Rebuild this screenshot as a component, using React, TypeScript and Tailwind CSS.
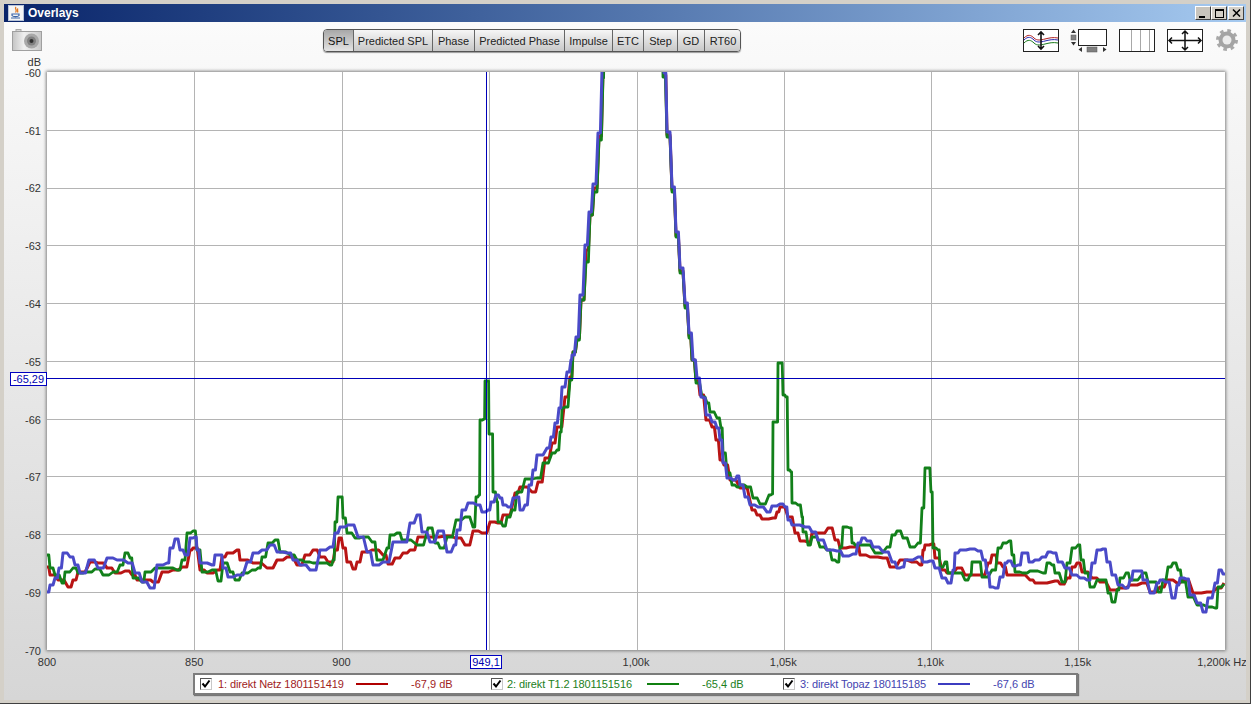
const font = "font-['Liberation_Sans',Arial,sans-serif]"

const tabs = [
    { label: "SPL", width: "w-[30px]", active: true },
    { label: "Predicted SPL", width: "w-[79px]" },
    { label: "Phase", width: "w-[42px]" },
    { label: "Predicted Phase", width: "w-[90px]" },
    { label: "Impulse", width: "w-[48px]" },
    { label: "ETC", width: "w-[31px]" },
    { label: "Step", width: "w-[34px]" },
    { label: "GD", width: "w-[27px]" },
    { label: "RT60", width: "w-[36px]" },
]

const yLabels = ["-60", "-61", "-62", "-63", "-64", "-65", "-66", "-67", "-68", "-69", "-70"]
const xLabels = ["800", "850", "900", "", "1,00k", "1,05k", "1,10k", "1,15k"]
const gridX = [194, 342, 489, 637, 784, 931, 1078]
const gridY = [130, 188, 245, 303, 361, 419, 476, 534, 592]

const redData = `47,567 50,575 58,580 68,587 73,580 78,572 90,562 98,563 107,568 115,573 125,571 132,575 137,580 147,580 153,582 162,572 173,570 182,567 190,550 193,548 200,570 207,573 217,570 222,557 227,553 237,550 240,560 253,563 267,568 277,560 287,557 297,565 305,555 313,550 320,557 328,562 330,562 335,550 339,538 343,548 347,562 353,569 357,562 362,552 372,550 383,555 388,564 395,558 403,553 410,550 418,537 430,537 445,536 455,538 465,545 473,531 482,533 490,522 498,523 503,515 515,493 520,487 532,492 538,482 545,458 552,443 557,427 565,397 570,377 573,352 577,338 581,300 586,250 590,215 594,188 599,136 603,70 604,40 662,40 664,75 667,135 672,190 676,236 680,271 685,306 689,336 692,360 696,380 700,395 706,420 712,427 716,440 720,460 724,465 730,480 740,488 752,510 757,515 762,519 773,518 777,512 780,507 788,517 795,533 800,541 808,542 812,533 820,533 828,528 835,540 840,548 850,547 857,547 860,555 870,557 883,558 890,567 900,560 912,562 920,565 923,550 925,545 932,544 935,558 942,570 947,573 957,568 965,575 980,575 988,563 992,555 995,555 997,563 1003,567 1007,575 1018,575 1030,580 1035,583 1055,581 1060,584 1067,578 1072,567 1077,563 1082,572 1092,578 1100,582 1110,590 1120,588 1130,585 1142,583 1150,592 1160,587 1167,580 1177,583 1182,580 1193,593 1207,592 1217,588 1224,583`

const greenData = `47,555 50,568 55,575 62,583 65,572 73,568 78,573 87,572 95,569 103,575 113,572 120,565 125,553 130,558 133,578 142,582 145,572 155,568 167,568 177,570 182,560 187,533 193,531 197,550 202,572 212,570 218,581 223,563 230,572 235,580 242,573 252,570 258,568 262,557 268,543 275,540 280,552 290,555 297,560 305,562 313,563 323,563 330,565 333,560 335,522 338,497 341,497 343,518 347,533 355,538 363,537 372,542 377,560 387,548 390,535 397,533 402,540 417,545 428,528 435,543 440,548 447,537 456,520 465,517 473,527 476,497 479,495 480,420 484,419 485,381 488,381 489,434 492,434 493,492 497,502 498,522 503,526 507,517 512,510 517,492 525,479 537,478 543,463 552,453 557,450 560,432 562,408 565,407 570,380 573,352 577,340 581,300 586,262 590,215 594,192 599,140 603,78 604,40 662,40 663,77 667,137 672,192 676,237 680,273 685,308 689,338 692,360 696,383 702,397 707,403 710,412 717,418 721,428 723,453 727,473 732,485 737,487 740,485 747,487 753,498 760,504 769,495 772,494 773,422 777,422 778,363 781,363 783,395 786,397 788,470 791,472 792,503 798,505 802,517 803,532 808,545 812,537 820,547 827,550 832,560 837,562 840,547 843,527 850,528 852,543 855,545 863,545 875,553 887,547 892,535 897,531 903,538 910,547 918,543 922,508 925,468 928,468 931,492 933,548 938,550 940,567 945,562 948,573 957,573 965,580 970,575 972,562 978,562 982,577 992,570 998,548 1003,543 1009,541 1012,555 1015,572 1023,573 1030,571 1043,573 1047,563 1052,565 1055,573 1062,582 1067,563 1072,548 1078,545 1081,560 1085,573 1090,587 1097,580 1103,580 1108,593 1112,602 1117,590 1120,578 1126,573 1130,580 1143,573 1148,582 1153,582 1158,592 1163,580 1168,567 1173,563 1178,570 1182,582 1188,597 1197,605 1208,607 1215,608 1218,587 1224,584`

const blueData = `47,592 50,585 55,578 59,568 63,553 70,557 75,565 80,573 89,560 98,568 107,558 117,560 128,563 135,573 142,582 150,588 157,565 167,563 170,548 175,539 180,550 185,555 190,538 195,537 197,550 200,563 212,565 215,555 220,555 223,568 228,577 237,575 247,562 253,553 262,550 270,545 277,552 287,553 293,560 300,565 310,570 320,550 330,547 335,533 340,527 348,525 358,537 367,552 373,565 383,562 393,542 402,542 410,523 417,515 422,532 430,542 438,531 447,552 454,545 457,530 462,510 468,503 477,505 482,512 488,510 491,502 496,495 500,498 503,505 508,507 513,498 517,497 520,510 525,505 529,485 533,470 537,455 547,448 551,437 555,423 559,408 562,387 567,372 571,360 572,355 576,337 580,295 585,245 589,212 593,184 598,133 602,70 603,40 663,40 664,73 667,132 672,187 676,232 680,268 685,303 689,333 693,360 697,378 701,397 704,398 706,415 712,422 717,428 720,440 723,463 727,478 733,480 737,476 740,485 745,497 750,505 758,507 767,512 772,506 780,504 785,507 788,520 792,525 805,527 812,532 818,540 827,550 837,551 843,556 853,554 858,543 862,538 867,541 873,547 883,552 892,562 897,568 902,567 905,560 918,557 923,562 930,561 935,568 942,578 948,583 953,570 955,553 960,550 970,549 978,551 983,560 987,573 990,587 995,588 1000,577 1005,563 1008,561 1013,566 1018,565 1022,553 1026,553 1029,562 1035,560 1042,557 1048,552 1053,553 1058,562 1065,568 1072,575 1080,578 1087,580 1092,563 1097,550 1103,549 1107,562 1112,575 1118,585 1125,588 1130,580 1133,571 1140,571 1143,580 1150,593 1157,583 1160,580 1165,582 1172,598 1177,585 1180,578 1186,579 1190,595 1197,603 1203,612 1208,598 1215,583 1219,570 1223,574 1225,574`

// hold each value for a bit before moving on, the trace is stepped in the original
function stepped(data: string) {
    const pts = data.split(" ").map((p) => p.split(",").map(Number))
    const out: string[] = []
    pts.forEach((p, i) => {
        out.push(`${p[0]},${p[1]}`)
        const next = pts[i + 1]
        if (next) out.push(`${p[0] + (next[0] - p[0]) * 0.6},${p[1]}`)
    })
    return out.join(" ")
}

function JavaIcon() {
    return (
        <svg width="16" height="16" viewBox="0 0 16 16">
            <rect x="0.5" y="0.5" width="15" height="15" fill="#f4f4f4" stroke="#b8c4d8" />
            <path d="M8 2C6 4 10 5 7.500 7.500M10 3.500C8.500 5 10.500 5.500 9.500 7.500" fill="none" stroke="#e07820" strokeWidth="1.300" />
            <path d="M4 9H11V10.500C10 12 5 12 4 10.500ZM3 13H12" fill="none" stroke="#3a64a8" strokeWidth="1.200" />
        </svg>
    )
}

function WinButton({ children, dim }: { children: React.ReactNode; dim?: boolean }) {
    return (
        <div
            className={`flex h-[14px] w-[16px] items-center justify-center border border-t-white border-l-white border-r-[#404040] border-b-[#404040] ${dim ? "bg-[#c8c4bc]" : "bg-[#d4d0c8]"}`}
        >
            {children}
        </div>
    )
}

function Camera() {
    return (
        <svg width="30" height="22" viewBox="0 0 30 22">
            <defs>
                <linearGradient id="cam" x1="0" y1="0" x2="1" y2="0">
                    <stop offset="0" stopColor="#c4c4c4" />
                    <stop offset="0.4" stopColor="#f0f0f0" />
                    <stop offset="1" stopColor="#c8c8c8" />
                </linearGradient>
            </defs>
            <rect x="4" y="0.500" width="5" height="3" fill="#d8d8d8" stroke="#a8a8a8" />
            <rect x="0.500" y="2.500" width="29" height="19" fill="url(#cam)" stroke="#a0a0a0" />
            <circle cx="19.500" cy="12" r="7.500" fill="#a8a8a8" />
            <circle cx="19.500" cy="12" r="4.500" fill="#808080" />
            <circle cx="19.500" cy="12" r="2" fill="#303030" />
        </svg>
    )
}

function SpreadIcon() {
    return (
        <svg width="36" height="23" viewBox="0 0 36 23" className="shrink-0">
            <rect x="0.500" y="0.500" width="35" height="22" fill="#fff" stroke="#222" />
            <path d="M1 9C5 5 8 6 11 9S18 11 22 10 30 8 35 9" fill="none" stroke="#b02020" />
            <path d="M1 11C5 7 8 8 11 11S18 13 22 12 30 10 35 11" fill="none" stroke="#2828b0" />
            <path d="M1 14C5 10 8 11 11 14S18 16 22 15 30 13 35 14" fill="none" stroke="#187818" />
            <path d="M18 3V20M15 6L18 3L21 6M15 17L18 20L21 17" fill="none" stroke="#111" strokeWidth="1.600" />
        </svg>
    )
}

function ResizeIcon() {
    return (
        <svg width="37" height="27" viewBox="0 0 37 27" className="shrink-0">
            <rect x="8.500" y="0.500" width="28" height="16" fill="#fff" stroke="#222" />
            <path d="M1 4L3.500 0.500L6 4Z" fill="#333" />
            <rect x="1" y="6" width="5" height="5" fill="#808080" stroke="#555" strokeWidth="0.500" />
            <path d="M1 13L3.500 16.500L6 13Z" fill="#333" />
            <path d="M12 18L8.500 20.500L12 23Z" fill="#333" />
            <rect x="17" y="18" width="10" height="5" fill="#808080" stroke="#555" strokeWidth="0.500" />
            <path d="M33 18L36.500 20.500L33 23Z" fill="#333" />
        </svg>
    )
}

function GridIcon() {
    return (
        <svg width="36" height="23" viewBox="0 0 36 23" className="shrink-0">
            <rect x="0.500" y="0.500" width="35" height="22" fill="#fff" stroke="#222" />
            <path d="M12.500 1V22M21.500 1V22M30.500 1V22" stroke="#a8a8a8" />
        </svg>
    )
}

function MoveIcon() {
    return (
        <svg width="36" height="23" viewBox="0 0 36 23" className="shrink-0">
            <rect x="0.500" y="0.500" width="35" height="22" fill="#fff" stroke="#222" />
            <path d="M18 2V21M2 11.500H34M15 5L18 2L21 5M15 18L18 21L21 18M5 8.500L2 11.500L5 14.500M31 8.500L34 11.500L31 14.500" fill="none" stroke="#111" strokeWidth="1.500" />
        </svg>
    )
}

function Gear() {
    return (
        <svg width="22" height="22" viewBox="0 0 22 22" className="shrink-0">
            <circle cx="11" cy="11" r="9.500" fill="none" stroke="#a8a8a8" strokeWidth="3" strokeDasharray="3.600 3.860" />
            <circle cx="11" cy="11" r="8.500" fill="#a4a4a4" />
            <circle cx="11" cy="11" r="4.500" fill="#ececec" />
        </svg>
    )
}

function Check() {
    return (
        <div className="flex h-[12px] w-[12px] shrink-0 items-center justify-center border border-t-[#555] border-l-[#555] border-r-[#c8c8c8] border-b-[#c8c8c8] bg-white">
            <svg width="10" height="10" viewBox="0 0 10 10">
                <path d="M1.500 4.500L4 7.500L8.500 1.500" fill="none" stroke="#000" strokeWidth="2" />
            </svg>
        </div>
    )
}

function LegendItem(props: { name: string; value: string; text: string; line: string; nameW: string; valueW: string; gap: string }) {
    return (
        <div className={`flex items-center ${props.gap}`}>
            <Check />
            <span className={`whitespace-nowrap tracking-[-0.1px] ${props.nameW} ${props.text}`}>{props.name}</span>
            <span className={`h-[2px] w-[32px] shrink-0 ${props.line}`} />
            <span className={`whitespace-nowrap ${props.valueW} ${props.text}`}>{props.value}</span>
        </div>
    )
}

export default function App() {
    return (
        <div className={`flex h-[704px] w-[1251px] flex-col overflow-hidden border-b border-r border-b-[#404040] border-r-[#404040] bg-[#d4d0c8] px-[4px] pb-[3px] pt-[4px] text-[11px] text-[#333] ${font}`}>
            {/* title bar */}
            <div className="flex h-[18px] shrink-0 items-center bg-gradient-to-r from-[#0a246a] to-[#a6caf0] pl-[4px] pr-[2px]">
                <JavaIcon />
                <span className="ml-[4px] text-[12px] font-bold text-white">Overlays</span>
                <div className="ml-auto flex">
                    <WinButton dim>
                        <span className="mt-[7px] mr-[2px] h-[2px] w-[6px] bg-black" />
                    </WinButton>
                    <WinButton>
                        <span className="h-[9px] w-[9px] border border-t-2 border-black" />
                    </WinButton>
                    <div className="ml-[1px]">
                        <WinButton>
                            <svg width="9" height="8" viewBox="0 0 9 8">
                                <path d="M1 0.500L8 7.500M8 0.500L1 7.500" stroke="#000" strokeWidth="1.500" />
                            </svg>
                        </WinButton>
                    </div>
                </div>
            </div>

            <div className="relative flex min-h-0 flex-1 flex-col overflow-hidden bg-gradient-to-b from-[#fbfbfb] to-[#d6d6d6]">
                {/* toolbar */}
                <div className="flex h-[50px] shrink-0 items-start">
                    <div className="flex w-[38px] shrink-0 flex-col items-end pt-[7px]">
                        <Camera />
                        <span className="mt-[5px] pr-[1px] leading-[12px]">dB</span>
                    </div>
                    <div className="ml-[281px] mt-[7px] flex h-[23px] w-[418px] shrink-0 overflow-hidden rounded-[4px] border border-[#555] shadow-[0_1px_1px_#999]">
                        {tabs.map((t) => (
                            <div
                                key={t.label}
                                className={`flex shrink-0 items-center justify-center border-r border-r-[#666] pt-[1px] last:border-r-0 ${t.width} ${t.active ? "bg-gradient-to-b from-[#a8a8a8] to-[#e4e4e4] text-[#111]" : "bg-gradient-to-b from-[#f6f6f6] to-[#c8c8c8] text-[#222]"}`}
                            >
                                {t.label}
                            </div>
                        ))}
                    </div>
                    <div className="ml-[282px] mt-[7px] flex items-start">
                        <SpreadIcon />
                        <div className="ml-[11px]">
                            <ResizeIcon />
                        </div>
                        <div className="ml-[12px]">
                            <GridIcon />
                        </div>
                        <div className="ml-[12px]">
                            <MoveIcon />
                        </div>
                        <div className="ml-[13px]">
                            <Gear />
                        </div>
                    </div>
                </div>

                {/* plot row */}
                <div className="flex h-[578px] shrink-0">
                    <div className="mt-[1px] flex h-[578px] w-[43px] shrink-0 flex-col justify-between pr-[6px]">
                        {yLabels.map((l) => (
                            <div key={l} className="flex h-0 items-center justify-end">
                                {l}
                            </div>
                        ))}
                    </div>
                    <div className="h-[578px] w-[1178px] shrink-0 bg-white shadow-[0_0_3px_1px_#808080]">
                        <svg width="1178" height="578" viewBox="47 72 1178 578" className="block">
                            {gridX.map((x) => (
                                <line key={x} x1={x + 0.5} x2={x + 0.5} y1="72" y2="650" stroke="#b4b4b4" />
                            ))}
                            {gridY.map((y) => (
                                <line key={y} x1="47" x2="1225" y1={y + 0.5} y2={y + 0.5} stroke="#b4b4b4" />
                            ))}
                            <polyline points={stepped(redData)} fill="none" stroke="#b81414" strokeWidth="3" strokeLinejoin="round" />
                            <polyline points={stepped(greenData)} fill="none" stroke="#12801a" strokeWidth="2.800" strokeLinejoin="round" />
                            <polyline points={stepped(blueData)} fill="none" stroke="#4a4ac8" strokeWidth="3" strokeLinejoin="round" />
                            <line x1="486.500" x2="486.500" y1="72" y2="650" stroke="#0000b8" />
                            <line x1="47" x2="1225" y1="378.500" y2="378.500" stroke="#0000b8" />
                        </svg>
                    </div>
                </div>

                {/* x axis */}
                <div className="ml-[43px] mt-[5px] flex h-[14px] w-[1178px] shrink-0 justify-between leading-[14px]">
                    {xLabels.map((l, i) => (
                        <div key={i} className="flex w-0 justify-center whitespace-nowrap">
                            {l}
                        </div>
                    ))}
                    <div className="flex w-0 justify-center whitespace-nowrap">
                        <span className="pr-[6px]">1,200k Hz</span>
                    </div>
                </div>

                {/* legend */}
                <div className="ml-[189px] mt-[4px] flex h-[22px] w-[885px] shrink-0 items-center border-2 border-[#7c7c7c] bg-white pl-[5px] shadow-[1px_1px_1px_#777]">
                    <LegendItem name="1: direkt Netz 1801151419" value="-67,9 dB" text="text-[#a01c1c]" line="bg-[#b00000]" nameW="ml-[6px] w-[138px]" valueW="ml-[23px] w-[39px]" gap="" />
                    <LegendItem name="2: direkt T1.2 1801151516" value="-65,4 dB" text="text-[#1c801c]" line="bg-[#108010]" nameW="ml-[4px] w-[140px]" valueW="ml-[23px] w-[39px]" gap="ml-[41px]" />
                    <LegendItem name="3: direkt Topaz 180115185" value="-67,6 dB" text="text-[#4444b0]" line="bg-[#3c3cc0]" nameW="ml-[5px] w-[138px]" valueW="ml-[23px] w-[41px]" gap="ml-[42px]" />
                </div>

                {/* crosshair read-outs */}
                <div className="absolute left-[6px] top-[350px] flex h-[14px] w-[37px] items-center justify-center border border-[#0000c0] bg-white leading-none text-[#0000b0]">
                    -65,29
                </div>
                <div className="absolute left-[466px] top-[633px] flex h-[14px] w-[32px] items-center justify-center border border-[#0000c0] bg-white leading-none text-[#0000b0]">
                    949,1
                </div>
            </div>
        </div>
    )
}
